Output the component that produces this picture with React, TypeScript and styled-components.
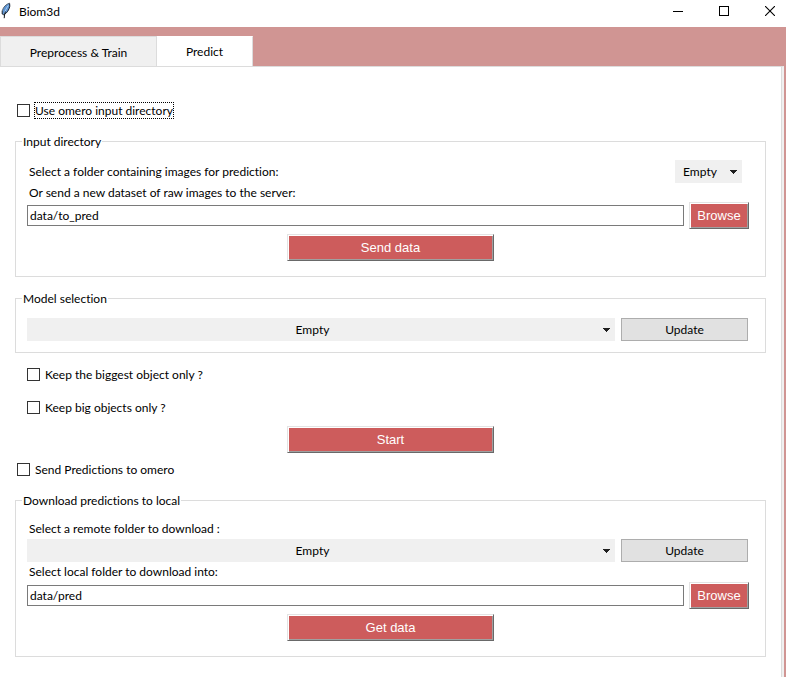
import React, { useState } from "react";
import styled, { createGlobalStyle, css } from "styled-components";

const GlobalStyle = createGlobalStyle`
  *, *::before, *::after { box-sizing: border-box; }
  body {
    margin: 0;
    background: #ffffff;
    color: #000000;
    font: 12px/17px Lato, "Open Sans", sans-serif;
    font-variant-ligatures: none;
  }
  button, input, select { font: inherit; color: inherit; margin: 0; }
`;

const Window = styled.div`
  display: flex;
  flex-direction: column;
  min-height: 100vh;
  background: #d09593;
`;

const TitleBar = styled.header`
  display: flex;
  align-items: center;
  height: 27px;
  padding-bottom: 5px;
  background: #ffffff;
`;

const Title = styled.h1`
  flex: 1;
  margin: 0 0 0 7px;
  font-size: 12px;
  font-weight: 400;
  line-height: 17px;
`;

const WindowButton = styled.button`
  display: flex;
  align-items: center;
  justify-content: center;
  width: 46px;
  height: 22px;
  padding: 0;
  border: 0;
  background: transparent;

  &:last-child {
    justify-content: flex-start;
    width: 39px;
    padding-left: 18px;
  }
`;

const TabBar = styled.div`
  display: flex;
  align-items: flex-end;
  padding-top: 9px;
`;

const Tab = styled.button<{ $active?: boolean; $width: number }>`
  width: ${(p) => p.$width}px;
  height: 30px;
  padding: 2px 0 0;
  border: 1px solid #dcdcdc;
  border-bottom: 0;
  background: #f0f0f0;

  ${(p) =>
    p.$active &&
    css`
      padding-top: 0;
      border-left: 0;
      border-color: #ffffff #dcdcdc;
      background: #ffffff;
    `}
`;

const Panel = styled.main`
  flex: 1;
  display: flex;
  flex-direction: column;
  margin-right: 2px;
  padding: 34px 16px 20px 15px;
  border-top: 1px solid #dcdcdc;
  border-right: 2px solid #f0f0f0;
  box-shadow: inset -1px 0 0 #dcdcdc;
  background: #ffffff;
`;

const CheckLabel = styled.label<{ $indent?: boolean; $gap: number }>`
  display: flex;
  align-items: center;
  align-self: flex-start;
  gap: 4px;
  height: 19px;
  margin-top: ${(p) => p.$gap}px;
  margin-left: ${(p) => (p.$indent ? 12 : 2)}px;
`;

const CheckBox = styled.input`
  appearance: none;
  width: 13px;
  height: 13px;
  border: 1px solid #333333;
  background: #ffffff;

  &:checked { background: #333333; box-shadow: inset 0 0 0 2px #ffffff; }
`;

const CheckText = styled.span<{ $focused?: boolean }>`
  padding: 0 1px;
  outline: ${(p) => (p.$focused ? "1px dotted #000000" : "none")};
  outline-offset: -1px;
`;

const Group = styled.fieldset<{ $gap: number }>`
  min-width: 0;
  margin: ${(p) => p.$gap}px 0 0;
  padding: 0;
  border: 1px solid #dcdcdc;
`;

const Legend = styled.legend`
  margin-left: 6px;
  padding: 0 1px;
  line-height: 17px;
`;

const GroupBody = styled.div<{ $pad: number; $padBottom: number }>`
  display: flex;
  flex-direction: column;
  padding: ${(p) => p.$pad}px 0 ${(p) => p.$padBottom}px;
`;

const Row = styled.div<{ $kind: "folder" | "model" | "path" }>`
  display: grid;
  align-items: center;
  margin-left: 11px;
  ${(p) =>
    p.$kind === "folder" &&
    css`
      grid-template-columns: 1fr 67px;
      margin-right: 23px;
    `}
  ${(p) =>
    p.$kind === "model" &&
    css`
      grid-template-columns: 1fr 127px;
      gap: 6px;
      margin-right: 17px;
    `}
  ${(p) =>
    p.$kind === "path" &&
    css`
      grid-template-columns: 1fr 60px;
      gap: 5px;
      margin-right: 16px;
    `}
`;

const FieldLabel = styled.label<{ $height?: number; $inRow?: boolean }>`
  padding-left: ${(p) => (p.$inRow ? 2 : 13)}px;
  line-height: ${(p) => p.$height ?? 20}px;
`;

const SelectBox = styled.div`
  display: grid;
  align-items: center;
  height: 23px;
  background: #f0f0f0;

  > * { grid-area: 1 / 1; }
`;

const Select = styled.select`
  appearance: none;
  width: 100%;
  height: 23px;
  padding: 0 17px 0 0;
  border: 0;
  border-radius: 0;
  background: transparent;
  text-align: center;
  text-align-last: center;
`;

const Arrow = styled.svg`
  justify-self: end;
  margin-right: 5px;
  pointer-events: none;
`;

const PathInput = styled.input`
  width: 100%;
  height: 21px;
  padding: 0 2px;
  border: 1px solid #7a7a7a;
  border-radius: 0;
  background: #ffffff;
`;

const RedButton = styled.button<{ $wide?: boolean; $gap?: number }>`
  align-self: center;
  width: ${(p) => (p.$wide ? "207px" : "100%")};
  height: 27px;
  margin-top: ${(p) => p.$gap ?? 0}px;
  padding: 0;
  border: 1px solid;
  border-color: #e3e3e3 #696969 #696969 #e3e3e3;
  box-shadow: inset 1px 1px 0 #ffffff, inset -1px -1px 0 #a0a0a0;
  background: #cd5c5c;
  color: #ffffff;
  font: 13px/17px "Liberation Sans", Arial, sans-serif;
`;

const GreyButton = styled.button`
  height: 23px;
  padding: 0;
  border: 1px solid #adadad;
  background: #e1e1e1;
`;

function Feather() {
  return (
    <svg width="12" height="18" viewBox="0 0 12 18" aria-hidden="true">
      <path d="M9.6 1.4C6.5 2 3.6 4.8 2.6 8.2L2.2 11.8l1.6.8C7 11.2 9.2 7.6 9.8 4z" fill="#5b93d3" />
      <path d="M9.6 1.2C6.3 2 3.2 5 2.4 8.6" fill="none" stroke="#52606e" />
      <path d="M9.6 1.4l.2 2.8C9.2 7.6 7 11.2 3.8 12.8L2.2 12V8.6" fill="none" stroke="#16202e" />
      <path d="M8.4 3.4C6.4 6 5.2 8.6 4.2 12" fill="none" stroke="#a9cdf0" />
      <path d="M5.4 9.5C4.6 11.6 4.3 13.6 4.2 16.2" fill="none" stroke="#101418" />
    </svg>
  );
}

function Dropdown({ id, label }: { id: string; label?: string }) {
  return (
    <SelectBox>
      <Select id={id} aria-label={label} defaultValue="Empty">
        <option>Empty</option>
      </Select>
      <Arrow width="7" height="4" viewBox="0 0 7 4" shapeRendering="crispEdges" aria-hidden="true">
        <path d="M0 0h7v1H6v1H5v1H4v1H3V3H2V2H1V1H0z" fill="#1f1f1f" />
      </Arrow>
    </SelectBox>
  );
}

interface CheckProps {
  text: string;
  gap: number;
  indent?: boolean;
  focused?: boolean;
}

function Check({ text, gap, indent, focused }: CheckProps) {
  return (
    <CheckLabel $gap={gap} $indent={indent}>
      <CheckBox type="checkbox" />
      <CheckText $focused={focused}>{text}</CheckText>
    </CheckLabel>
  );
}

function PathRow({ id, value }: { id: string; value: string }) {
  const [path, setPath] = useState(value);
  return (
    <Row $kind="path">
      <PathInput id={id} type="text" value={path} onChange={(e) => setPath(e.target.value)} />
      <RedButton type="button">Browse</RedButton>
    </Row>
  );
}

export default function App() {
  return (
    <>
      <GlobalStyle />
      <Window>
        <TitleBar>
          <Feather />
          <Title>Biom3d</Title>
          <WindowButton type="button" aria-label="Minimize">
            <svg width="10" height="10" viewBox="0 0 10 10" shapeRendering="crispEdges">
              <path d="M0 5.5h10" stroke="#000" />
            </svg>
          </WindowButton>
          <WindowButton type="button" aria-label="Maximize">
            <svg width="10" height="10" viewBox="0 0 10 10" shapeRendering="crispEdges">
              <path d="M.5.5h9v9h-9z" fill="none" stroke="#000" />
            </svg>
          </WindowButton>
          <WindowButton type="button" aria-label="Close">
            <svg width="10" height="10" viewBox="0 0 10 10">
              <path d="M0 0l10 10M10 0L0 10" stroke="#000" strokeWidth="1.1" />
            </svg>
          </WindowButton>
        </TitleBar>

        <TabBar role="tablist">
          <Tab type="button" role="tab" aria-selected={false} $width={157}>
            Preprocess &amp; Train
          </Tab>
          <Tab type="button" role="tab" aria-selected $active $width={96}>
            Predict
          </Tab>
        </TabBar>

        <Panel>
          <Check text="Use omero input directory" gap={0} focused />

          <Group $gap={13}>
            <Legend>Input directory</Legend>
            <GroupBody $pad={10} $padBottom={15}>
              <Row $kind="folder">
                <FieldLabel htmlFor="folder" $inRow>
                  Select a folder containing images for prediction:
                </FieldLabel>
                <Dropdown id="folder" />
              </Row>
              <FieldLabel htmlFor="raw-path" $height={19}>
                Or send a new dataset of raw images to the server:
              </FieldLabel>
              <PathRow id="raw-path" value="data/to_pred" />
              <RedButton type="button" $wide $gap={5}>
                Send data
              </RedButton>
            </GroupBody>
          </Group>

          <Group $gap={13}>
            <Legend>Model selection</Legend>
            <GroupBody $pad={11} $padBottom={11}>
              <Row $kind="model">
                <Dropdown id="model" label="Model selection" />
                <GreyButton type="button">Update</GreyButton>
              </Row>
            </GroupBody>
          </Group>

          <Check text="Keep the biggest object only ?" gap={12} indent />
          <Check text="Keep big objects only ?" gap={14} indent />
          <RedButton type="button" $wide $gap={9}>
            Start
          </RedButton>
          <Check text="Send Predictions to omero" gap={7} />

          <Group $gap={13}>
            <Legend>Download predictions to local</Legend>
            <GroupBody $pad={10} $padBottom={15}>
              <FieldLabel htmlFor="remote">Select a remote folder to download :</FieldLabel>
              <Row $kind="model">
                <Dropdown id="remote" />
                <GreyButton type="button">Update</GreyButton>
              </Row>
              <FieldLabel htmlFor="local-path">Select local folder to download into:</FieldLabel>
              <PathRow id="local-path" value="data/pred" />
              <RedButton type="button" $wide $gap={5}>
                Get data
              </RedButton>
            </GroupBody>
          </Group>
        </Panel>
      </Window>
    </>
  );
}
